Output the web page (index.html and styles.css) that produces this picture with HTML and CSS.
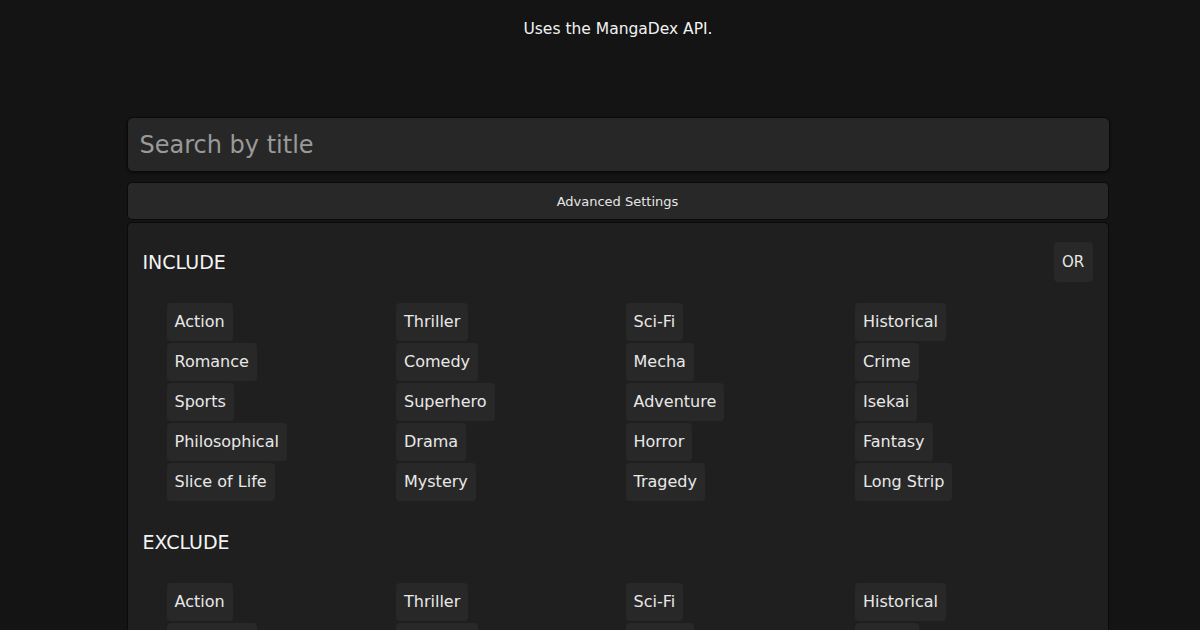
FILE: index.html
```html
<!DOCTYPE html>
<html>
<head>
<meta charset="utf-8">
<link rel="stylesheet" href="styles.css">
</head>
<body>
<div class="page">
  <p class="subtitle">Uses the MangaDex API.</p>
  <div class="main">
    <input class="search" type="text" placeholder="Search by title">
    <button class="adv">Advanced Settings</button>
    <div class="panel">
      <div class="section-head">
        <h2>INCLUDE</h2>
        <button class="mode">OR</button>
      </div>
      <ul class="tags">
        <li><span class="tag">Action</span></li>
        <li><span class="tag">Thriller</span></li>
        <li><span class="tag">Sci-Fi</span></li>
        <li><span class="tag">Historical</span></li>
        <li><span class="tag">Romance</span></li>
        <li><span class="tag">Comedy</span></li>
        <li><span class="tag">Mecha</span></li>
        <li><span class="tag">Crime</span></li>
        <li><span class="tag">Sports</span></li>
        <li><span class="tag">Superhero</span></li>
        <li><span class="tag">Adventure</span></li>
        <li><span class="tag">Isekai</span></li>
        <li><span class="tag">Philosophical</span></li>
        <li><span class="tag">Drama</span></li>
        <li><span class="tag">Horror</span></li>
        <li><span class="tag">Fantasy</span></li>
        <li><span class="tag">Slice of Life</span></li>
        <li><span class="tag">Mystery</span></li>
        <li><span class="tag">Tragedy</span></li>
        <li><span class="tag">Long Strip</span></li>
      </ul>
      <div class="section-head">
        <h2>EXCLUDE</h2>
      </div>
      <ul class="tags">
        <li><span class="tag">Action</span></li>
        <li><span class="tag">Thriller</span></li>
        <li><span class="tag">Sci-Fi</span></li>
        <li><span class="tag">Historical</span></li>
        <li><span class="tag">Romance</span></li>
        <li><span class="tag">Comedy</span></li>
        <li><span class="tag">Mecha</span></li>
        <li><span class="tag">Crime</span></li>
      </ul>
    </div>
  </div>
</div>
</body>
</html>
```

FILE: styles.css
```css
* { box-sizing: border-box; }
html, body {
  margin: 0;
  padding: 0;
  background: #141414;
  color: #f0f0f0;
  font-family: "DejaVu Sans", "Open Sans", sans-serif;
  overflow: hidden;
  height: 630px;
}
.page {
  display: flex;
  flex-direction: column;
  align-items: center;
}
.subtitle {
  margin: 18px 0 0 36px;
  font-size: 15.5px;
  line-height: 22px;
  color: #f2f2f2;
}
.main {
  width: 983px;
  margin-top: 77px;
  margin-left: 36px;
  display: flex;
  flex-direction: column;
}
.search {
  height: 55px;
  width: 983px;
  background: #272727;
  border: 1px solid #0a0a0a;
  border-radius: 6px;
  padding: 0 12px;
  font-family: inherit;
  font-size: 24px;
  color: #eee;
  outline: none;
  box-shadow: 0 1px 3px rgba(0,0,0,0.5);
}
.search::placeholder { color: #9a9a9a; }
.adv {
  margin-top: 10px;
  height: 38px;
  width: 982px;
  background: #282828;
  border: 1px solid #0a0a0a;
  border-radius: 5px;
  color: #e6e6e6;
  font-family: inherit;
  font-size: 13px;
}
.panel {
  margin-top: 2px;
  width: 982px;
  background: #1f1f1f;
  border: 1px solid #0a0a0a;
  border-bottom: none;
  border-radius: 5px 5px 0 0;
  padding: 19px 15px 0 15px;
  height: 420px;
}
.section-head {
  display: flex;
  align-items: center;
  justify-content: space-between;
  height: 40px;
}
.section-head h2 {
  margin: 0;
  font-size: 19px;
  font-weight: normal;
  color: #f4f4f4;
}
.mode {
  width: 39px;
  height: 40px;
  background: #282828;
  border: none;
  border-radius: 4px;
  color: #e6e6e6;
  font-family: inherit;
  font-size: 15px;
  padding: 0;
}
.tags {
  list-style: none;
  margin: 21px 0 21px 24px;
  padding: 0;
  display: grid;
  grid-template-columns: repeat(4, 229.5px);
  row-gap: 2px;
}
.tags li { display: flex; }
.tag {
  display: inline-block;
  background: #282828;
  border-radius: 4px;
  padding: 7px 8px;
  font-size: 16px;
  line-height: 24px;
  color: #e8e8e8;
}
```
